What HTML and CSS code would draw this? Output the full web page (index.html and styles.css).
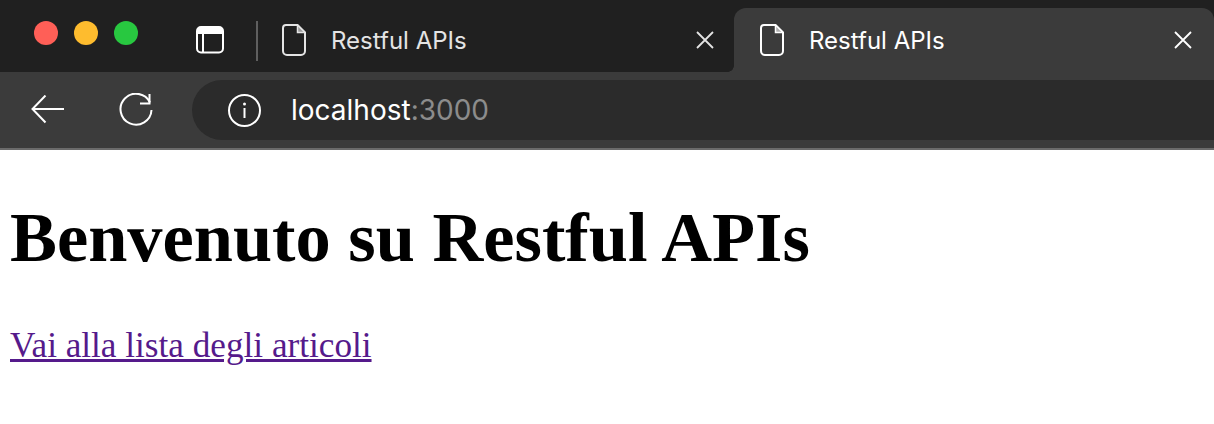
FILE: index.html
```html
<!DOCTYPE html>
<html lang="it">
<head>
    <meta charset="UTF-8">
    <meta name="viewport" content="width=device-width, initial-scale=1.0">
    <title>Restful APIs</title>
    <link rel="stylesheet" href="styles.css">
</head>
<body>

<!-- Barra delle schede -->
<div class="tabbar">
    <div class="lights">
        <span class="light light-red"></span>
        <span class="light light-yellow"></span>
        <span class="light light-green"></span>
    </div>
    <svg class="sidebar-icon" width="28" height="28" viewBox="0 0 28 28">
        <rect x="1" y="1" width="26" height="25.500" rx="4" fill="none" stroke="#fff" stroke-width="2"/>
        <path d="M1 8V5a4 4 0 0 1 4-4h18a4 4 0 0 1 4 4v3z" fill="#fff"/>
        <path d="M7 8v18" stroke="#fff" stroke-width="2"/>
    </svg>
    <div class="tab-separator"></div>
    <div class="tab">
        <svg class="file-icon" width="24" height="32" viewBox="0 0 24 32">
            <path d="M4 1h11.500L23 8.500V27a4 4 0 0 1-4 4H5a4 4 0 0 1-4-4V4a3 3 0 0 1 3-3z" fill="none" stroke="#e4e4e4" stroke-width="2"/>
            <path d="M15.500 1v7.500H23z" fill="#9a9a9a" stroke="#e4e4e4" stroke-width="1.500"/>
        </svg>
        <span class="tab-title">Restful APIs</span>
        <svg class="tab-close" width="18" height="18" viewBox="0 0 18 18">
            <path d="M1 1l16 16M17 1L1 17" stroke="#e4e4e4" stroke-width="1.800"/>
        </svg>
    </div>
    <div class="tab tab-active">
        <svg class="file-icon" width="24" height="32" viewBox="0 0 24 32">
            <path d="M4 1h11.500L23 8.500V27a4 4 0 0 1-4 4H5a4 4 0 0 1-4-4V4a3 3 0 0 1 3-3z" fill="none" stroke="#fff" stroke-width="2"/>
            <path d="M15.500 1v7.500H23z" fill="#b0b0b0" stroke="#fff" stroke-width="1.500"/>
        </svg>
        <span class="tab-title">Restful APIs</span>
        <svg class="tab-close" width="18" height="18" viewBox="0 0 18 18">
            <path d="M1 1l16 16M17 1L1 17" stroke="#fff" stroke-width="1.800"/>
        </svg>
    </div>
</div>

<!-- Barra degli strumenti -->
<div class="toolbar">
    <svg class="back-icon" width="34" height="30" viewBox="0 0 34 30">
        <path d="M33 14H2M14.500 0.500L1.500 14 14.500 27.500" fill="none" stroke="#fff" stroke-width="2"/>
    </svg>
    <svg class="reload-icon" width="34" height="34" viewBox="0 0 34 34">
        <path d="M31 9.500A15.500 15.500 0 1 0 32.500 17" fill="none" stroke="#fff" stroke-width="2"/>
        <path d="M30.500 1v9.500H21" fill="none" stroke="#fff" stroke-width="2"/>
    </svg>
    <div class="address-bar">
        <svg class="info-icon" width="33" height="33" viewBox="0 0 33 33">
            <circle cx="16.500" cy="16.500" r="15.500" fill="none" stroke="#fff" stroke-width="2"/>
            <circle cx="16.500" cy="10" r="1.500" fill="#fff"/>
            <path d="M16.500 14v10" stroke="#fff" stroke-width="2"/>
        </svg>
        <div class="address-text">localhost<span class="address-port">:3000</span></div>
    </div>
</div>

<!-- Pagina -->
<div class="page">
    <h1>Benvenuto su Restful APIs</h1>
    <a class="page-link" href="#">Vai alla lista degli articoli</a>
</div>

</body>
</html>
```

FILE: styles.css
```css
body {
    margin: 0;
    padding: 0;
    background-color: white;
    color: black;
    font-family: "Liberation Serif", serif;
    overflow: hidden;
}
.tabbar {
    display: flex;
    align-items: flex-start;
    height: 72px;
    background-color: #202020;
    font-family: Inter, sans-serif;
}
.lights {
    display: flex;
    gap: 16px;
    margin: 21px 0 0 34px;
}
.light {
    width: 24px;
    height: 24px;
    border-radius: 50%;
}
.light-red {
    background-color: #ff5f57;
}
.light-yellow {
    background-color: #febc2e;
}
.light-green {
    background-color: #28c840;
}
.sidebar-icon {
    margin: 26px 0 0 58px;
}
.tab-separator {
    width: 2px;
    height: 40px;
    margin: 21px 0 0 32px;
    background-color: #5f5f5f;
}
.tab {
    display: flex;
    align-items: center;
    flex: none;
    box-sizing: border-box;
    width: 476px;
    height: 64px;
    margin-top: 8px;
    padding: 0 20px 0 24px;
    color: #e4e4e4;
    font-size: 24px;
    position: relative;
}
.tab-title {
    flex: 1;
    margin-left: 25px;
}
.tab-active {
    width: 480px;
    padding: 0 22px 0 26px;
    background-color: #3b3b3b;
    border-radius: 12px 12px 0 0;
    color: white;
}
/* esquina inferior de la pestaña activa */
.tab-active::before {
    content: "";
    position: absolute;
    left: -6px;
    bottom: 0;
    width: 6px;
    height: 6px;
    background: radial-gradient(circle at 0 0, #202020 5.500px, #3b3b3b 6px);
}
.toolbar {
    display: flex;
    align-items: center;
    box-sizing: border-box;
    height: 78px;
    padding: 8px 0 8px 31px;
    background-color: #3b3b3b;
    border-bottom: 2px solid #6b6b6b;
}
.reload-icon {
    margin-left: 54px;
}
.address-bar {
    display: flex;
    align-items: center;
    flex: 1;
    height: 60px;
    margin-left: 39px;
    padding-left: 36px;
    background-color: #2b2b2b;
    border-radius: 30px 0 0 30px;
}
.address-text {
    margin-left: 30px;
    color: white;
    font-family: Inter, sans-serif;
    font-size: 28px;
}
.address-port {
    color: #8c8c8c;
}
.page {
    padding: 0 10px;
}
h1 {
    margin: 47px 0 0;
    font-size: 70.400px;
    font-weight: bold;
}
.page-link {
    display: inline-block;
    margin-top: 48px;
    color: #551a8b;
    font-size: 35.200px;
}
```
